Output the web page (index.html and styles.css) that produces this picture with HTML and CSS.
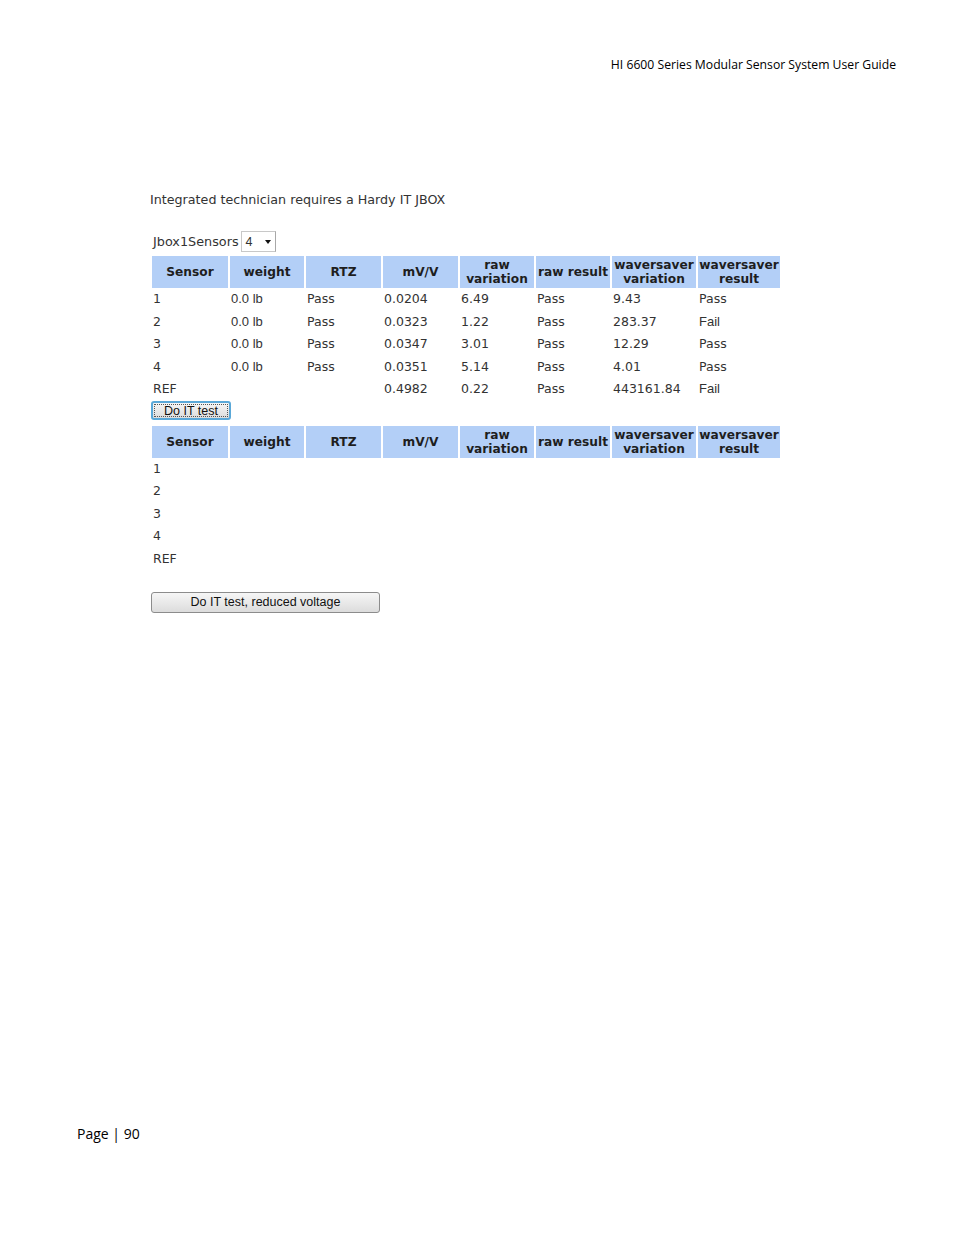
FILE: index.html
```html
<!DOCTYPE html>
<html>
<head>
<meta charset="utf-8">
<link rel="stylesheet" href="styles.css">
</head>
<body>
<div class="page">
  <div class="running-head">HI 6600 Series Modular Sensor System User Guide</div>
  <div class="content">
    <p class="intro">Integrated technician requires a Hardy IT JBOX</p>
    <div class="jbox">
      <span class="jbox-label">Jbox1Sensors</span>
      <span class="select">4<span class="caret"></span></span>
    </div>
    <table class="grid">
      <colgroup>
        <col class="c1"><col class="c2"><col class="c3"><col class="c4"><col class="c5"><col class="c6"><col class="c7"><col class="c8">
      </colgroup>
      <thead>
        <tr>
          <th>Sensor</th><th>weight</th><th>RTZ</th><th>mV/V</th><th>raw<br>variation</th><th>raw result</th><th>waversaver<br>variation</th><th>waversaver<br>result</th>
        </tr>
      </thead>
      <tbody>
        <tr><td>1</td><td class="ar">0.0 lb</td><td>Pass</td><td>0.0204</td><td>6.49</td><td>Pass</td><td>9.43</td><td>Pass</td></tr>
        <tr><td>2</td><td class="ar">0.0 lb</td><td>Pass</td><td>0.0323</td><td>1.22</td><td>Pass</td><td>283.37</td><td class="ar">Fail</td></tr>
        <tr><td>3</td><td class="ar">0.0 lb</td><td>Pass</td><td>0.0347</td><td>3.01</td><td>Pass</td><td>12.29</td><td>Pass</td></tr>
        <tr><td>4</td><td class="ar">0.0 lb</td><td>Pass</td><td>0.0351</td><td>5.14</td><td>Pass</td><td>4.01</td><td>Pass</td></tr>
        <tr><td>REF</td><td></td><td></td><td>0.4982</td><td>0.22</td><td>Pass</td><td>443161.84</td><td class="ar">Fail</td></tr>
      </tbody>
    </table>
    <div class="btn-row"><span class="btn btn-focus">Do IT test</span></div>
    <table class="grid">
      <colgroup>
        <col class="c1"><col class="c2"><col class="c3"><col class="c4"><col class="c5"><col class="c6"><col class="c7"><col class="c8">
      </colgroup>
      <thead>
        <tr>
          <th>Sensor</th><th>weight</th><th>RTZ</th><th>mV/V</th><th>raw<br>variation</th><th>raw result</th><th>waversaver<br>variation</th><th>waversaver<br>result</th>
        </tr>
      </thead>
      <tbody>
        <tr><td>1</td><td></td><td></td><td></td><td></td><td></td><td></td><td></td></tr>
        <tr><td>2</td><td></td><td></td><td></td><td></td><td></td><td></td><td></td></tr>
        <tr><td>3</td><td></td><td></td><td></td><td></td><td></td><td></td><td></td></tr>
        <tr><td>4</td><td></td><td></td><td></td><td></td><td></td><td></td><td></td></tr>
        <tr><td>REF</td><td></td><td></td><td></td><td></td><td></td><td></td><td></td></tr>
      </tbody>
    </table>
    <div class="btn-row2"><span class="btn btn-wide">Do IT test, reduced voltage</span></div>
  </div>
  <div class="footer">Page | 90</div>
</div>
</body>
</html>
```
FILE: styles.css
```css
html, body {
  margin: 0;
  padding: 0;
  background: #ffffff;
}
.page {
  width: 954px;
  height: 1235px;
  position: relative;
  font-family: "DejaVu Sans", sans-serif;
  color: #222;
}
.running-head {
  font-family: "Open Sans", "Liberation Sans", sans-serif;
  font-size: 12.2px;
  color: #000;
  text-align: right;
  padding: 57px 58px 0 0;
  line-height: 16px;
}
.content {
  padding: 119px 0 0 150px;
}
.intro {
  margin: 0;
  font-size: 12.7px;
  line-height: 16px;
  color: #333;
}
.jbox {
  margin-top: 23px;
  display: flex;
  align-items: center;
  padding-left: 3px;
  font-size: 12.8px;
  height: 21px;
  color: #333;
}
.select {
  margin-left: 2px;
  width: 29px;
  height: 19px;
  border: 1px solid #c8c8c8;
  border-right-color: #a8a8a8;
  display: inline-flex;
  align-items: center;
  padding-left: 4px;
  position: relative;
  font-family: "Liberation Sans", Arial, sans-serif;
  font-size: 12.5px;
}
.caret {
  position: absolute;
  right: 4px;
  top: 8px;
  width: 0;
  height: 0;
  border-left: 3px solid transparent;
  border-right: 3px solid transparent;
  border-top: 4px solid #111;
}
.grid {
  border-collapse: separate;
  border-spacing: 2px 0;
  margin-left: 0;
  margin-top: 4px;
  table-layout: fixed;
  width: 632px;
}
.c1 { width: 76px; }
.c2 { width: 74px; }
.c3 { width: 75px; }
.c4 { width: 75px; }
.c5 { width: 74px; }
.c6 { width: 74px; }
.c7 { width: 84px; }
.c8 { width: 82px; }
.grid th {
  background: #b3cff7;
  height: 32px;
  padding: 0;
  font-size: 12.2px;
  font-weight: bold;
  line-height: 14px;
  color: #1e1e1e;
  text-align: center;
  white-space: nowrap;
}
.grid td {
  height: 22.5px;
  padding: 0 0 0 1px;
  font-size: 12.5px;
  line-height: 14px;
  color: #333;
  white-space: nowrap;
  vertical-align: middle;
}
.grid td.ar {
  font-family: "Liberation Sans", Arial, sans-serif;
  font-size: 13px;
}
.btn-row {
  padding-left: 1px;
  margin-top: -1px;
  height: 22px;
}
.btn {
  display: inline-flex;
  align-items: center;
  justify-content: center;
  box-sizing: border-box;
  font-family: "Liberation Sans", Arial, sans-serif;
  font-size: 12.5px;
  color: #111;
  background: linear-gradient(#f6f6f6, #dcdcdc);
  border: 1px solid #8a8a8a;
  border-radius: 3px;
}
.btn-focus {
  width: 80px;
  height: 19px;
  border: 2px solid #5aa8d8;
  border-radius: 3px;
  outline: 1px dotted #555;
  outline-offset: -4px;
}
.btn-row2 {
  padding-left: 1px;
  margin-top: 21px;
}
.btn-wide {
  width: 229px;
  height: 21px;
  border-color: #8c8c8c;
}
.footer {
  position: absolute;
  left: 77px;
  top: 1124px;
  font-family: "Open Sans", "Liberation Sans", sans-serif;
  font-size: 14px;
  color: #000;
}
```
